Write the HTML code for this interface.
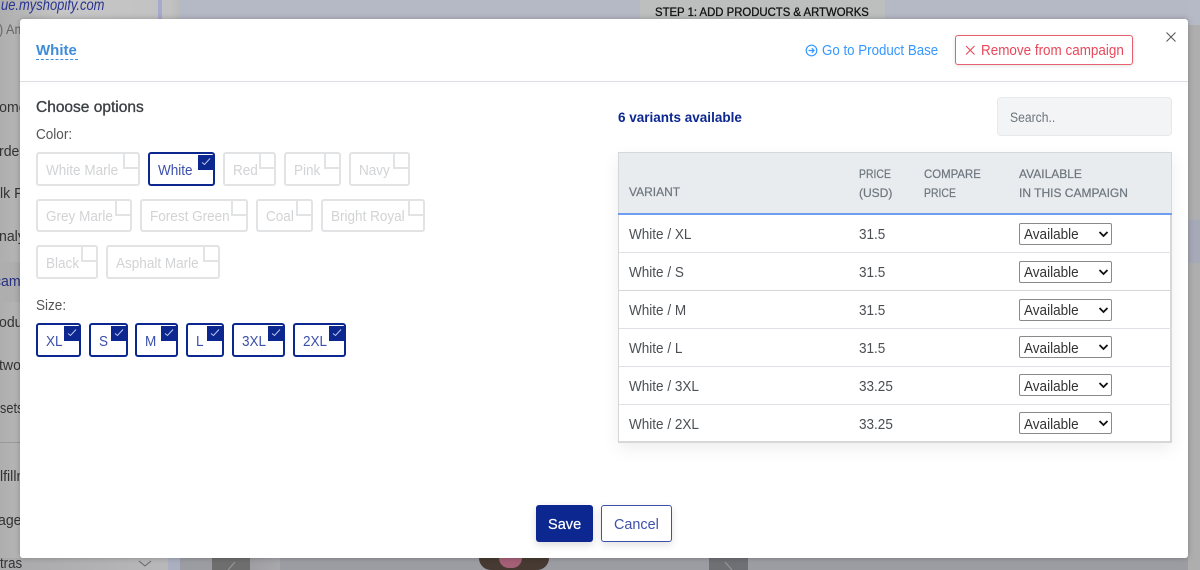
<!DOCTYPE html>
<html><head><meta charset="utf-8"><title>White</title>
<style>
html,body{margin:0;padding:0;width:1200px;height:570px;overflow:hidden;background:#adadad}
body{position:relative;font-family:"Liberation Sans",sans-serif;color:#4b4f54}
div,span,svg{position:absolute;box-sizing:border-box}
.t{white-space:nowrap;line-height:18px;height:18px;font-size:14.4px;transform:scaleX(.94);transform-origin:0 50%}
.n{transform:none}
.c{border:2px solid #e2e3e5;border-radius:3px;background:#fff;overflow:hidden}
.c .k{width:16px;height:16px;border-left:2px solid #e2e3e5;border-bottom:2px solid #e2e3e5;top:-1px;right:-1px}
.c .t{color:#d2d3d5;left:8px;top:8px}
.c.r .t{top:7px}
.s{border-color:#0c2790}
.s .t{color:#3c50ab}
.c.s .k{background:#0c2790;border:0;width:15px;height:15px;top:1px;right:0}
.k svg{left:2px;top:1px}
.o{overflow:hidden}
.hd{color:#6c757d;font-size:12px;-webkit-text-stroke:.2px #6c757d;transform:none}
.line{left:0;width:552px;height:1px;background:#dee2e6}
.sel{left:400px;width:93px;height:22px;border:1px solid #8a8a8a;border-radius:2px;background:#fff}
.sel .t{left:4px;top:2px;color:#333}
.sel svg{left:78px;top:7px}
.u{top:3px!important}
.tc{top:auto}
</style></head><body>
<!-- background page -->
<div style="left:0;top:0;width:180px;height:570px;background:linear-gradient(90deg,#aeaeae 0,#c6c6c6 60px,#c2c2c2 170px,#bababa 180px)"></div>
<div style="left:180px;top:0;width:1020px;height:19px;background:#b5b9c5"></div>
<div style="left:158px;top:0;width:4px;height:19px;background:#a9a9cf"></div>
<div style="left:640px;top:0;width:245px;height:19px;background:#bdbfbf"></div>
<span class="t" style="left:655px;top:3px;color:#111;font-size:12px;-webkit-text-stroke:.3px #111;transform:scaleX(.945)">STEP 1: ADD PRODUCTS &amp; ARTWORKS</span>
<span class="t" style="left:1px;top:-3px;color:#2a3490;font-size:16px;font-style:italic;transform:scaleX(.81)">ue.myshopify.com</span>
<div class="o" style="left:0;top:20px;width:20px;height:20px"><span class="t" style="left:-1px;top:1px;color:#666;font-size:13.5px">) Am</span></div>
<div style="left:0;top:262px;width:20px;height:40px;background:#aeaeae"></div>
<div style="left:0;top:442px;width:20px;height:1px;background:#999"></div>
<div class="o" style="left:0;top:90px;width:20px;height:468px">
<span class="t" style="left:-11px;top:9px;color:#333;font-size:15px">Home</span>
<span class="t" style="left:-1px;top:53px;color:#333;font-size:15px">rders</span>
<span class="t" style="left:0;top:95px;color:#333;font-size:15px">lk Pr</span>
<span class="t" style="left:-1px;top:138px;color:#333;font-size:15px">naly</span>
<span class="t" style="left:-6px;top:183px;color:#262f80;font-size:15px">camp</span>
<span class="t" style="left:-1px;top:224px;color:#333;font-size:15px">odu</span>
<span class="t" style="left:-1px;top:267px;color:#333;font-size:15px">two</span>
<span class="t" style="left:0;top:310px;color:#333;font-size:15px;transform:scaleX(.85)">sets</span>
<span class="t" style="left:0;top:378px;color:#333;font-size:15px">lfillment</span>
<span class="t" style="left:-2px;top:422px;color:#333;font-size:15px">ages</span>
</div>
<div style="left:0;top:558px;width:1200px;height:12px;background:#9c9da3"></div>
<div style="left:0;top:558px;width:168px;height:12px;background:linear-gradient(90deg,#a9a9ab,#b8b8ba)"></div>
<span class="t" style="left:0;top:555px;color:#333;transform:scaleX(.92)">tras</span>
<svg style="left:138px;top:560px" width="14" height="8" viewBox="0 0 14 8"><path d="M1 1l6 5 6-5" fill="none" stroke="#666" stroke-width="1"/></svg>
<div style="left:168px;top:558px;width:12px;height:12px;background:#aab0c0"></div>
<div style="left:212px;top:558px;width:38px;height:12px;background:#6f6e6f"></div>
<svg style="left:225px;top:560px" width="12" height="10"><path d="M3 10L10 2" stroke="#999"/></svg>
<div style="left:250px;top:558px;width:30px;height:12px;background:linear-gradient(120deg,#9d9ca0,#a9a9ad)"></div>
<div style="left:709px;top:558px;width:39px;height:12px;background:#6f7074"></div>
<svg style="left:722px;top:560px" width="12" height="10"><path d="M3 2L10 10" stroke="#999"/></svg>
<div style="left:479px;top:558px;width:70px;height:12px;background:#463a32;border-radius:0 0 20px 20px"></div>
<div style="left:499px;top:558px;width:23px;height:10px;background:#a56076;border-radius:0 0 11px 11px"></div>
<div style="left:1188px;top:0;width:12px;height:570px;background:#aeaeae"></div>
<div style="left:1188px;top:0;width:12px;height:25px;background:#b6bac6"></div>
<div style="left:1188px;top:220px;width:12px;height:43px;background:#a6a9b8"></div>

<!-- modal -->
<div style="left:20px;top:19px;width:1168px;height:539px;background:#fff;border-radius:3px;box-shadow:0 0 6px rgba(0,0,0,.25)"></div>
<div style="left:20px;top:81px;width:1168px;height:1px;background:#dcdfe3;box-shadow:0 2px 5px rgba(0,0,0,.07)"></div>

<span class="t n" style="left:36px;top:42px;color:#3f8cd8;font-size:15px;font-weight:700">White</span>
<div style="left:36px;top:59px;width:42px;border-top:1px dashed #3f8cd8"></div>

<svg style="left:805px;top:44px" width="13" height="13" viewBox="0 0 13 13"><circle cx="6.5" cy="6.5" r="5.3" fill="none" stroke="#3597ff" stroke-width="1.2"/><path d="M3.5 6.5h5.500M6.800 4.200l2.300 2.300-2.300 2.300" fill="none" stroke="#3597ff" stroke-width="1.2"/></svg>
<span class="t" style="left:822px;top:42px;color:#3597ff;transform:scaleX(.925)">Go to Product Base</span>
<div style="left:955px;top:35px;width:178px;height:30px;border:1px solid #e8606f;border-radius:3px;background:#fff;box-shadow:0 1px 4px rgba(0,0,0,.12)"></div>
<svg style="left:965px;top:45px" width="11" height="11" viewBox="0 0 11 11"><path d="M1 1l8.500 8.500M9.500 1L1 9.500" stroke="#e8485a" stroke-width="1.1"/></svg>
<span class="t" style="left:981px;top:42px;color:#e8485a;transform:scaleX(.935)">Remove from campaign</span>
<svg style="left:1165px;top:31px" width="12" height="12" viewBox="0 0 12 12"><path d="M1.500 1.500l9 9M10.500 1.500l-9 9" stroke="#555" stroke-width="1"/></svg>

<span class="t n" style="left:36px;top:99px;color:#3c4146;font-size:15.5px;-webkit-text-stroke:.35px #3c4146">Choose options</span>
<span class="t" style="left:36px;top:126px;color:#555">Color:</span>

<div class="c" style="left:36px;top:152px;width:104px;height:34px"><span class="k"></span><span class="t">White Marle</span></div>
<div class="c s" style="left:148px;top:152px;width:67px;height:34px"><span class="k"><svg width="11" height="11" viewBox="0 0 11 11"><path d="M2 6.500l2.500 2 5.500-6" fill="none" stroke="#c0c8ea" stroke-width="1"/></svg></span><span class="t">White</span></div>
<div class="c" style="left:223px;top:152px;width:53px;height:34px"><span class="k"></span><span class="t">Red</span></div>
<div class="c" style="left:284px;top:152px;width:57px;height:34px"><span class="k"></span><span class="t">Pink</span></div>
<div class="c" style="left:349px;top:152px;width:61px;height:34px"><span class="k"></span><span class="t">Navy</span></div>

<div class="c r" style="left:36px;top:199px;width:96px;height:33px"><span class="k"></span><span class="t">Grey Marle</span></div>
<div class="c r" style="left:140px;top:199px;width:108px;height:33px"><span class="k"></span><span class="t">Forest Green</span></div>
<div class="c r" style="left:256px;top:199px;width:57px;height:33px"><span class="k"></span><span class="t">Coal</span></div>
<div class="c r" style="left:321px;top:199px;width:104px;height:33px"><span class="k"></span><span class="t">Bright Royal</span></div>

<div class="c" style="left:36px;top:245px;width:62px;height:34px"><span class="k"></span><span class="t">Black</span></div>
<div class="c" style="left:106px;top:245px;width:114px;height:34px"><span class="k"></span><span class="t">Asphalt Marle</span></div>

<span class="t" style="left:36px;top:297px;color:#555">Size:</span>
<div class="c s" style="left:36px;top:323px;width:45px;height:34px"><span class="k"><svg width="11" height="11" viewBox="0 0 11 11"><path d="M2 6.500l2.500 2 5.500-6" fill="none" stroke="#c0c8ea" stroke-width="1"/></svg></span><span class="t">XL</span></div>
<div class="c s" style="left:89px;top:323px;width:39px;height:34px"><span class="k"><svg width="11" height="11" viewBox="0 0 11 11"><path d="M2 6.500l2.500 2 5.500-6" fill="none" stroke="#c0c8ea" stroke-width="1"/></svg></span><span class="t">S</span></div>
<div class="c s" style="left:135px;top:323px;width:43px;height:34px"><span class="k"><svg width="11" height="11" viewBox="0 0 11 11"><path d="M2 6.500l2.500 2 5.500-6" fill="none" stroke="#c0c8ea" stroke-width="1"/></svg></span><span class="t">M</span></div>
<div class="c s" style="left:186px;top:323px;width:38px;height:34px"><span class="k"><svg width="11" height="11" viewBox="0 0 11 11"><path d="M2 6.500l2.500 2 5.500-6" fill="none" stroke="#c0c8ea" stroke-width="1"/></svg></span><span class="t">L</span></div>
<div class="c s" style="left:232px;top:323px;width:53px;height:34px"><span class="k"><svg width="11" height="11" viewBox="0 0 11 11"><path d="M2 6.500l2.500 2 5.500-6" fill="none" stroke="#c0c8ea" stroke-width="1"/></svg></span><span class="t">3XL</span></div>
<div class="c s" style="left:293px;top:323px;width:53px;height:34px"><span class="k"><svg width="11" height="11" viewBox="0 0 11 11"><path d="M2 6.500l2.500 2 5.500-6" fill="none" stroke="#c0c8ea" stroke-width="1"/></svg></span><span class="t">2XL</span></div>

<span class="t n" style="left:618px;top:109px;color:#0c2790;font-weight:700;font-size:13.5px">6 variants available</span>
<div style="left:997px;top:97px;width:175px;height:39px;background:#f3f4f6;border:1px solid #e6e9ed;border-radius:4px"></div>
<span class="t" style="left:1010px;top:109px;color:#6c757d;font-size:13.5px;transform:scaleX(.9)">Search..</span>

<!-- table -->
<div style="left:618px;top:152px;width:554px;height:291px;background:#fff;border:1px solid #d5d7d9;border-width:1px 2px 2px 1px;box-shadow:0 6px 16px rgba(0,0,0,.07)">
<div style="left:0;top:0;width:552px;height:60px;background:#e9ecef"></div>
<div style="left:-1px;top:60px;width:554px;height:2px;background:#6d9cf0"></div>
<span class="t hd" style="left:10px;top:30px">VARIANT</span>
<span class="t hd" style="left:240px;top:12px;transform:scaleX(.87);transform-origin:0 50%">PRICE</span><span class="t hd" style="left:240px;top:31px">(USD)</span>
<span class="t hd" style="left:305px;top:12px;transform:scaleX(.95);transform-origin:0 50%">COMPARE</span><span class="t hd" style="left:305px;top:31px;transform:scaleX(.87);transform-origin:0 50%">PRICE</span>
<span class="t hd" style="left:400px;top:12px">AVAILABLE</span><span class="t hd" style="left:400px;top:31px">IN THIS CAMPAIGN</span>

<span class="t" style="left:10px;top:73px">White / XL</span><span class="t" style="left:240px;top:73px">31.5</span><div class="sel" style="top:70px"><span class="t">Available</span><svg width="11" height="7" viewBox="0 0 11 7"><path d="M1.500 1l4 4 4-4" fill="none" stroke="#111" stroke-width="1.800"/></svg></div>
<div class="line" style="top:99px"></div>
<span class="t" style="left:10px;top:111px">White / S</span><span class="t" style="left:240px;top:111px">31.5</span><div class="sel" style="top:108px"><span class="t">Available</span><svg width="11" height="7" viewBox="0 0 11 7"><path d="M1.500 1l4 4 4-4" fill="none" stroke="#111" stroke-width="1.800"/></svg></div>
<div class="line" style="top:137px;background:#d4d7da"></div>
<span class="t" style="left:10px;top:149px">White / M</span><span class="t" style="left:240px;top:149px">31.5</span><div class="sel" style="top:146px"><span class="t">Available</span><svg width="11" height="7" viewBox="0 0 11 7"><path d="M1.500 1l4 4 4-4" fill="none" stroke="#111" stroke-width="1.800"/></svg></div>
<div class="line" style="top:175px"></div>
<span class="t" style="left:10px;top:187px">White / L</span><span class="t" style="left:240px;top:187px">31.5</span><div class="sel" style="top:183px"><span class="t u">Available</span><svg width="11" height="7" viewBox="0 0 11 7"><path d="M1.500 1l4 4 4-4" fill="none" stroke="#111" stroke-width="1.800"/></svg></div>
<div class="line" style="top:213px"></div>
<span class="t" style="left:10px;top:225px">White / 3XL</span><span class="t" style="left:240px;top:225px">33.25</span><div class="sel" style="top:221px"><span class="t u">Available</span><svg width="11" height="7" viewBox="0 0 11 7"><path d="M1.500 1l4 4 4-4" fill="none" stroke="#111" stroke-width="1.800"/></svg></div>
<div class="line" style="top:251px"></div>
<span class="t" style="left:10px;top:263px">White / 2XL</span><span class="t" style="left:240px;top:263px">33.25</span><div class="sel" style="top:259px"><span class="t u">Available</span><svg width="11" height="7" viewBox="0 0 11 7"><path d="M1.500 1l4 4 4-4" fill="none" stroke="#111" stroke-width="1.800"/></svg></div>
</div>

<div style="left:536px;top:505px;width:57px;height:37px;background:#0c2790;border-radius:3px;box-shadow:0 3px 8px rgba(0,0,0,.15)"></div>
<span class="t" style="left:548px;top:516px;color:#fff;font-size:15px;-webkit-text-stroke:.2px #fff;transform:scaleX(.97)">Save</span>
<div style="left:601px;top:505px;width:71px;height:37px;background:#fff;border:1px solid #3e52ab;border-radius:3px;box-shadow:0 3px 8px rgba(0,0,0,.12)"></div>
<span class="t" style="left:614px;top:516px;color:#3e52ab;font-size:15px;transform:scaleX(.96)">Cancel</span>
</body></html>
